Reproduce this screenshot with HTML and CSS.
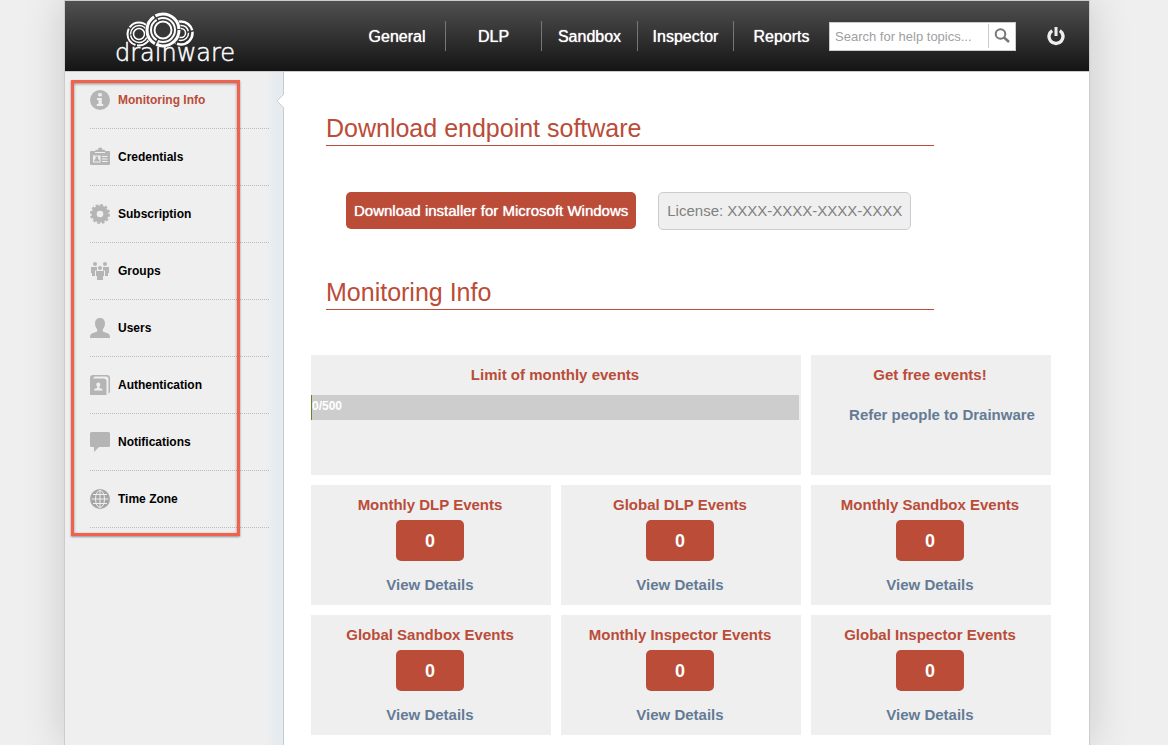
FILE: index.html
```html
<!DOCTYPE html>
<html lang="en">
  <head>
    <meta charset="UTF-8" />
    <meta name="viewport" content="width=device-width, initial-scale=1.0" />
    <title>Drainware - Monitoring Info</title>
    <link rel="stylesheet" href="styles.css">
  </head>

  <body>
    <div class="wrapper">
      <!-- Header -->
      <header class="header">
        <a href="#" class="logo" aria-label="drainware">
          <svg width="130" height="60" viewBox="0 0 130 60">
            <g fill="none" stroke="#fff">
              <circle cx="66" cy="27" r="11.5" stroke-width="2.5" stroke-dasharray="22 1.5" />
              <circle cx="66" cy="27" r="7.5" stroke-width="1.5" stroke-dasharray="14 1.5" />
              <circle cx="66" cy="27" r="4.5" stroke-width="1.5" />
              <circle cx="24" cy="28" r="11.5" stroke-width="2" stroke-dasharray="20 1.5" />
              <circle cx="24" cy="28" r="8.5" stroke-width="1.5" stroke-dasharray="25 1" />
              <circle cx="24" cy="28" r="5.5" stroke-width="1.5" />
            </g>
            <circle cx="48" cy="24" r="18" fill="#383838" />
            <g fill="none" stroke="#fff">
              <circle cx="48" cy="24" r="16" stroke-width="3" stroke-dasharray="32 1.5" />
              <circle cx="48" cy="24" r="12" stroke-width="2" stroke-dasharray="24 1.5" />
              <circle cx="48" cy="24" r="8.5" stroke-width="2" />
            </g>
            <text x="0" y="55" class="logo-text">drainware</text>
          </svg>
        </a>

        <div class="header-right">
          <nav class="main-nav">
            <a href="#">General</a>
            <a href="#">DLP</a>
            <a href="#">Sandbox</a>
            <a href="#">Inspector</a>
            <a href="#">Reports</a>
          </nav>
          <form class="search">
            <input type="text" placeholder="Search for help topics..." aria-label="Search for help topics" />
            <button type="button" aria-label="Search">
              <svg width="16" height="16" viewBox="0 0 16 16" fill="none" stroke="#777">
                <circle cx="6.5" cy="6" r="4.8" stroke-width="2" />
                <path d="M10 9.5l5 4.5" stroke-width="2.5" />
              </svg>
            </button>
          </form>
          <button type="button" class="power" aria-label="Log out">
            <svg width="18" height="20" viewBox="0 0 18 20" fill="none" stroke="#eee">
              <path d="M5.2 4.6a7 7 0 1 0 7.6 0" stroke-width="3.4" />
              <path d="M9 1v9" stroke-width="3" />
            </svg>
          </button>
        </div>
      </header>

      <div class="page">
        <!-- Sidebar -->
        <aside class="sidebar">
          <ul class="menu">
            <li class="active">
              <a href="#">
                <svg viewBox="0 0 20 20">
                  <circle cx="10" cy="10" r="10" />
                  <path class="cut" d="M8.2 3.2h3.6v3H8.200zM7 8h4.800v6H13.200v2H6.800v-2h1.700V10H7z" />
                </svg>
                Monitoring Info
              </a>
            </li>
            <li>
              <a href="#">
                <svg viewBox="0 0 20 20">
                  <path d="M1 4h4.500V2.800H8a2 2 0 0 1 4.500 0H15V4h4a1 1 0 0 1 1 1v12a1 1 0 0 1-1 1H1a1 1 0 0 1-1-1V5a1 1 0 0 1 1-1z" />
                  <path class="cut" d="M5 5h10v1H5zM3 8.500h7.500v7H3zM12 9h5.500v1H12zM12 11.500h5.500v1H12zM12 14h5.500v1H12z" />
                  <path d="M5.500 9.500h2.600v2.600l1.400 1v1.400H4.200v-1.400l1.300-1z" />
                </svg>
                Credentials
              </a>
            </li>
            <li>
              <a href="#">
                <svg viewBox="0 0 20 20">
                  <circle cx="10" cy="10" r="8.500" />
                  <circle cx="10" cy="10" r="8.800" fill="none" stroke="#b5b5b5" stroke-width="2.400" stroke-dasharray="2.700 1.908" />
                  <circle class="cut" cx="10" cy="10" r="3.300" />
                </svg>
                Subscription
              </a>
            </li>
            <li>
              <a href="#">
                <svg viewBox="0 0 20 20">
                  <circle cx="5" cy="3" r="2" />
                  <circle cx="15" cy="3" r="2" />
                  <circle cx="10" cy="7" r="2" />
                  <path d="M1 6h6v3.500H5V15H2V12H1zM19 6h-6v3.500h2V15h3V12h1zM6 10h8v5h-1v4H7v-4H6z" />
                </svg>
                Groups
              </a>
            </li>
            <li>
              <a href="#">
                <svg viewBox="0 0 20 20">
                  <path d="M10 0c3 0 5 2 5 5.500 0 2.500-1 4.500-2.200 5.800v2.200l5.200 2c1.500.7 2 1.800 2 4.500H0c0-2.700.5-3.800 2-4.500l5.200-2v-2.200C6 10 5 8 5 5.500 5 2 7 0 10 0z" />
                </svg>
                Users
              </a>
            </li>
            <li>
              <a href="#">
                <svg viewBox="0 0 20 20">
                  <path d="M3 0h14a3 3 0 0 1 3 3v14l-1.500 2V3.500A2.500 2.500 0 0 0 16 1.500H4.500L3 3.500H13.500a3 3 0 0 1 3 3V20H0V3a3 3 0 0 1 3-3z" />
                  <path class="cut" d="M8.300 7.500c1.200 0 2 .8 2 2 0 1-.4 1.800-.9 2.200v1.200l3 1.100v1.500H4.200V14l3-1.100v-1.200c-.5-.4-.9-1.200-.9-2.200 0-1.200.8-2 2-2z" />
                </svg>
                Authentication
              </a>
            </li>
            <li>
              <a href="#">
                <svg viewBox="0 0 20 20">
                  <path d="M1.500 0h17A1.500 1.500 0 0 1 20 1.500v12a1.500 1.500 0 0 1-1.500 1.500H9l-5 5v-5H1.500A1.500 1.500 0 0 1 0 13.500v-12A1.500 1.500 0 0 1 1.500 0z" />
                </svg>
                Notifications
              </a>
            </li>
            <li>
              <a href="#">
                <svg viewBox="0 0 20 20">
                  <circle class="globe" cx="10" cy="10" r="10" />
                  <g fill="none" stroke="#efefef">
                    <ellipse cx="10" cy="10" rx="4.500" ry="8.500" />
                    <path d="M10 1.500v17M1.500 10h17M3 5.500h14M3 14.500h14" />
                  </g>
                </svg>
                Time Zone
              </a>
            </li>
          </ul>
          <div class="highlight"></div>
          <svg class="pointer" width="8" height="14" viewBox="0 0 8 14">
            <path d="M8 0L1 7l7 7" fill="#fff" stroke="#ccc" />
          </svg>
        </aside>

        <!-- Main Content -->
        <main class="content">
          <section class="block">
            <h2>Download endpoint software</h2>
            <div class="download-row">
              <button type="button" class="download-button">Download installer for Microsoft Windows</button>
              <div class="license">License: XXXX-XXXX-XXXX-XXXX</div>
            </div>
          </section>

          <section class="block">
            <h2>Monitoring Info</h2>
          </section>

          <div class="cards">
            <div class="card wide">
              <h3>Limit of monthly events</h3>
              <div class="progress">0/500</div>
            </div>
            <div class="card">
              <h3>Get free events!</h3>
              <a href="#" class="refer">Refer people to Drainware</a>
            </div>
            <div class="card">
              <h3>Monthly DLP Events</h3>
              <div class="count">0</div>
              <a href="#">View Details</a>
            </div>
            <div class="card">
              <h3>Global DLP Events</h3>
              <div class="count">0</div>
              <a href="#">View Details</a>
            </div>
            <div class="card">
              <h3>Monthly Sandbox Events</h3>
              <div class="count">0</div>
              <a href="#">View Details</a>
            </div>
            <div class="card">
              <h3>Global Sandbox Events</h3>
              <div class="count">0</div>
              <a href="#">View Details</a>
            </div>
            <div class="card">
              <h3>Monthly Inspector Events</h3>
              <div class="count">0</div>
              <a href="#">View Details</a>
            </div>
            <div class="card">
              <h3>Global Inspector Events</h3>
              <div class="count">0</div>
              <a href="#">View Details</a>
            </div>
          </div>
        </main>
      </div>
    </div>
  </body>
</html>
```

FILE: styles.css
```css
/* General Styles */
* {
  box-sizing: border-box;
}

body {
  font-family: "Liberation Sans", Arial, Helvetica, sans-serif;
  margin: 0;
  padding-right: 14px;
  background-color: #efefef;
  overflow-x: hidden;
}

a {
  text-decoration: none;
}

button,
input {
  font-family: inherit;
}

.wrapper {
  display: flex;
  flex-direction: column;
  max-width: 1026px;
  min-height: 100vh;
  margin: 0 auto;
  border: 1px solid #ccc;
  border-bottom: none;
  background-color: #fff;
  box-shadow: 0 0 40px rgba(0, 0, 0, 0.16);
}

/* Header */
.header {
  display: flex;
  justify-content: space-between;
  align-items: center;
  height: 71px;
  padding: 0 24px 0 50px;
  background: linear-gradient(#505050, #141414);
  border-bottom: 1px solid #ccc;
}

.logo svg {
  display: block;
}

.logo-text {
  font-family: "DejaVu Sans", sans-serif;
  font-size: 24px;
  font-weight: 200;
  fill: #fff;
  stroke: #fff;
  stroke-width: 0.5;
}

.header-right {
  display: flex;
  align-items: center;
}

.main-nav {
  display: flex;
}

.main-nav a {
  width: 96px;
  height: 30px;
  color: #fff;
  font-size: 16px;
  line-height: 32px;
  text-align: center;
  text-shadow: 0 0 1px #fff;
}

.main-nav a + a {
  border-left: 1px solid #777;
}

.search {
  display: flex;
  align-items: center;
  width: 187px;
  height: 29px;
  border: 1px solid #ccc;
  background-color: #fff;
}

.search input {
  flex: 1;
  min-width: 0;
  padding: 0 5px;
  border: none;
  outline: none;
  background: none;
  font-size: 13px;
}

.search input::placeholder {
  color: #a0a0a0;
}

.search button {
  display: flex;
  align-items: center;
  justify-content: center;
  width: 27px;
  height: 24px;
  padding: 0;
  border: none;
  border-left: 1px solid #ccc;
  background: none;
  cursor: pointer;
}

.power {
  margin-left: 31px;
  padding: 0;
  border: none;
  background: none;
  cursor: pointer;
}

.power svg {
  display: block;
}

.page {
  display: flex;
  flex: 1;
}

/* Sidebar */
.sidebar {
  position: relative;
  flex: none;
  width: 219px;
  border-right: 1px solid #c5cbd0;
  background: linear-gradient(to right, #efefef 200px, #e6ebf0 212px);
}

.menu {
  list-style: none;
  margin: 0 14px 0 25px;
  padding: 0;
}

.menu li {
  border-bottom: 1px dotted #bbb;
}

.menu a {
  display: flex;
  align-items: center;
  gap: 8px;
  padding: 18px 0;
  color: #000;
  font-size: 12px;
  font-weight: bold;
  line-height: 20px;
}

.menu svg {
  width: 20px;
  height: 20px;
  fill: #b5b5b5;
}

.menu .cut {
  fill: #efefef;
}

.menu .globe {
  fill: #a5a5a5;
}

.menu .active a {
  color: #ba4c38;
}

/* Frame over the menu */
.highlight {
  position: absolute;
  top: 8px;
  left: 6px;
  width: 169px;
  height: 456px;
  border: 3px solid #f0614e;
  box-shadow: 0 1px 2px rgba(0, 0, 0, 0.4), inset 0 1px 3px rgba(0, 0, 0, 0.4);
  pointer-events: none;
}

.pointer {
  position: absolute;
  top: 22px;
  right: -1px;
}

/* Main Content */
.content {
  flex: 1;
  min-width: 0;
  padding: 41px 38px 10px 27px;
}

.block {
  margin: 0 117px 47px 15px;
}

.block:nth-of-type(2) {
  margin-bottom: 45px;
}

.block h2 {
  margin: 0;
  padding-bottom: 2px;
  border-bottom: 1px solid #ba4c38;
  color: #ba4c38;
  font-size: 25px;
  font-weight: normal;
  line-height: 30px;
}

.download-row {
  display: flex;
  align-items: flex-start;
  gap: 22px;
  margin: 46px 0 0 20px;
}

.download-button {
  padding: 0 8px;
  border: none;
  border-radius: 5px;
  background-color: #ba4c38;
  color: #fff;
  font-size: 15px;
  line-height: 37px;
  white-space: nowrap;
  text-shadow: 0 0 1px #fff;
  cursor: pointer;
}

.license {
  padding: 0 8px;
  border: 1px solid #ccc;
  border-radius: 5px;
  background-color: #efefef;
  color: #808080;
  font-size: 15px;
  line-height: 36px;
  white-space: nowrap;
}

/* Cards */
.cards {
  display: grid;
  grid-template-columns: repeat(3, 1fr);
  gap: 10px;
}

.card {
  display: flex;
  flex-direction: column;
  align-items: center;
  min-height: 120px;
  padding: 10px 2px 10px 0;
  background-color: #efefef;
  font-size: 15px;
  font-weight: bold;
  line-height: 20px;
}

.card.wide {
  grid-column: span 2;
}

.card h3 {
  margin: 0 0 5px;
  color: #ba4c38;
  font-size: 15px;
}

.card a {
  color: #647b95;
}

.card .refer {
  margin-top: 15px;
  padding-left: 24px;
}

.count {
  width: 68px;
  margin-bottom: 14px;
  padding-top: 2px;
  border-radius: 5px;
  background-color: #ba4c38;
  color: #fff;
  font-size: 18px;
  line-height: 39px;
  text-align: center;
}

.progress {
  align-self: stretch;
  height: 25px;
  margin: 5px 0 0;
  border-left: 1px solid #5f8a1f;
  background-color: #cdcdcd;
  color: #fff;
  font-size: 12px;
  line-height: 22px;
}
```
